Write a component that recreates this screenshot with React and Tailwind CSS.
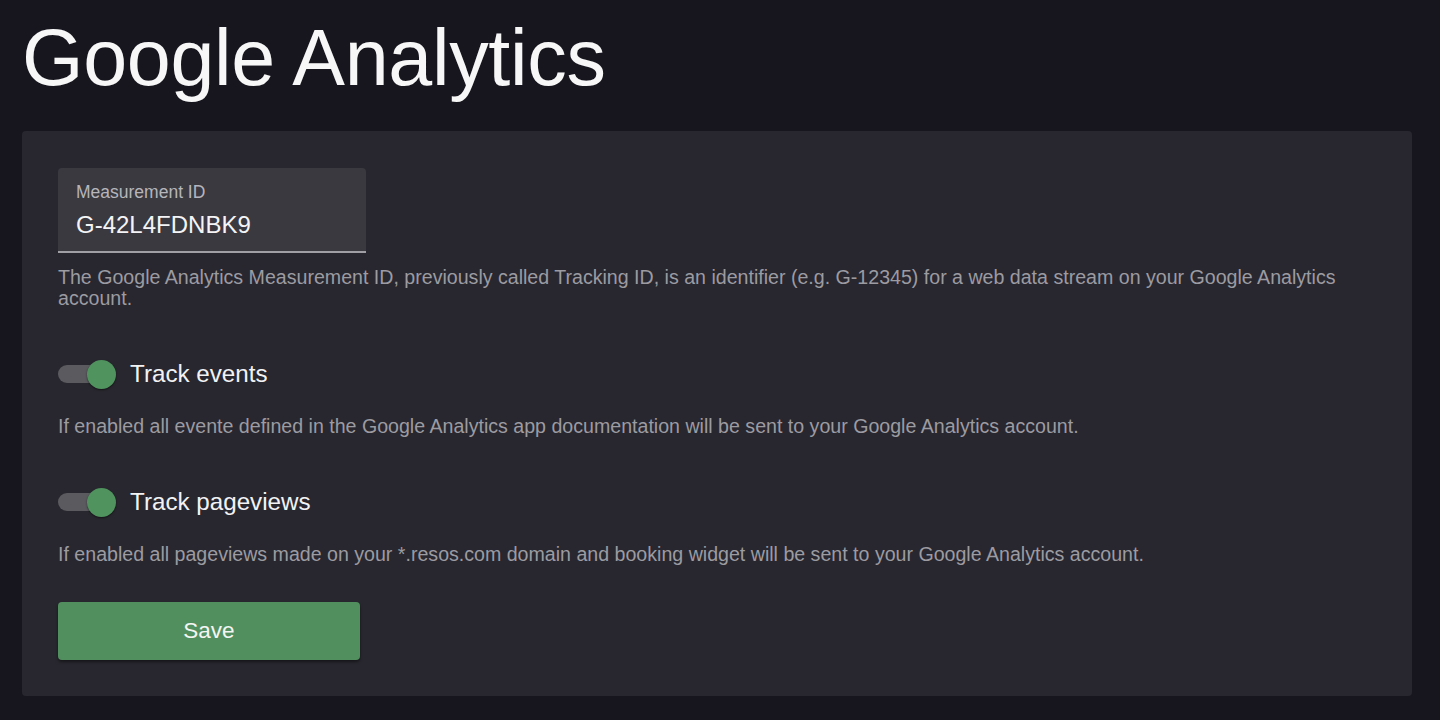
const font = { fontFamily: '"Liberation Sans", Arial, sans-serif' };

const Toggle = ({ on }) => (
  <div className="relative w-[58px] h-[30px] flex items-center">
    <div className="w-[48px] h-[18px] rounded-full bg-[#5a5a5f]" />
    <div
      className={`absolute top-[1px] w-[29px] h-[29px] rounded-full shadow-[0_1px_2px_rgba(0,0,0,0.5)] ${
        on ? 'right-0 bg-[#50935f]' : 'left-0 bg-[#cfcfd3]'
      }`}
    />
  </div>
);

const ToggleSetting = ({ label, description }) => (
  <div className="flex flex-col">
    <div className="flex items-center gap-[14px] mt-[50px]">
      <Toggle on />
      <span className="text-[24.2px] leading-[30px] text-[#f2f2f4]">{label}</span>
    </div>
    <p className="mt-[27px] text-[19.6px] leading-[21px] text-[#9c9ba1]">{description}</p>
  </div>
);

export default function App() {
  return (
    <div className="min-h-[720px] bg-[#17161e] px-[22px] pt-[19px] pb-[24px]" style={font}>
      <h1 className="text-[79px] leading-[78px] text-[#f7f7f8] tracking-[-0.3px]">Google Analytics</h1>

      <div className="mt-[34px] w-[1390px] rounded-[4px] bg-[#28272f] px-[36px] pt-[37px] pb-[36px]">
        <div className="w-[308px] rounded-t-[4px] bg-[#3a3940] border-b-2 border-[#a09fa6] pl-[18px] pt-[14px] pb-[12px]">
          <div className="text-[17.5px] leading-[20px] text-[#b6b5bb]">Measurement ID</div>
          <div className="mt-[9px] text-[24px] leading-[28px] text-[#f4f4f6]">G-42L4FDNBK9</div>
        </div>
        <p className="mt-[14px] text-[19.6px] leading-[21px] text-[#9c9ba1]">
          The Google Analytics Measurement ID, previously called Tracking ID, is an identifier (e.g. G-12345) for a web data stream on your Google Analytics account.
        </p>

        <ToggleSetting
          label="Track events"
          description="If enabled all evente defined in the Google Analytics app documentation will be sent to your Google Analytics account."
        />
        <ToggleSetting
          label="Track pageviews"
          description="If enabled all pageviews made on your *.resos.com domain and booking widget will be sent to your Google Analytics account."
        />

        <button className="mt-[37px] w-[302px] h-[58px] rounded-[4px] bg-[#528f5f] text-[22.5px] text-[#f3f5f3] shadow-[0_2px_3px_rgba(0,0,0,0.45)]">
          Save
        </button>
      </div>
    </div>
  );
}
